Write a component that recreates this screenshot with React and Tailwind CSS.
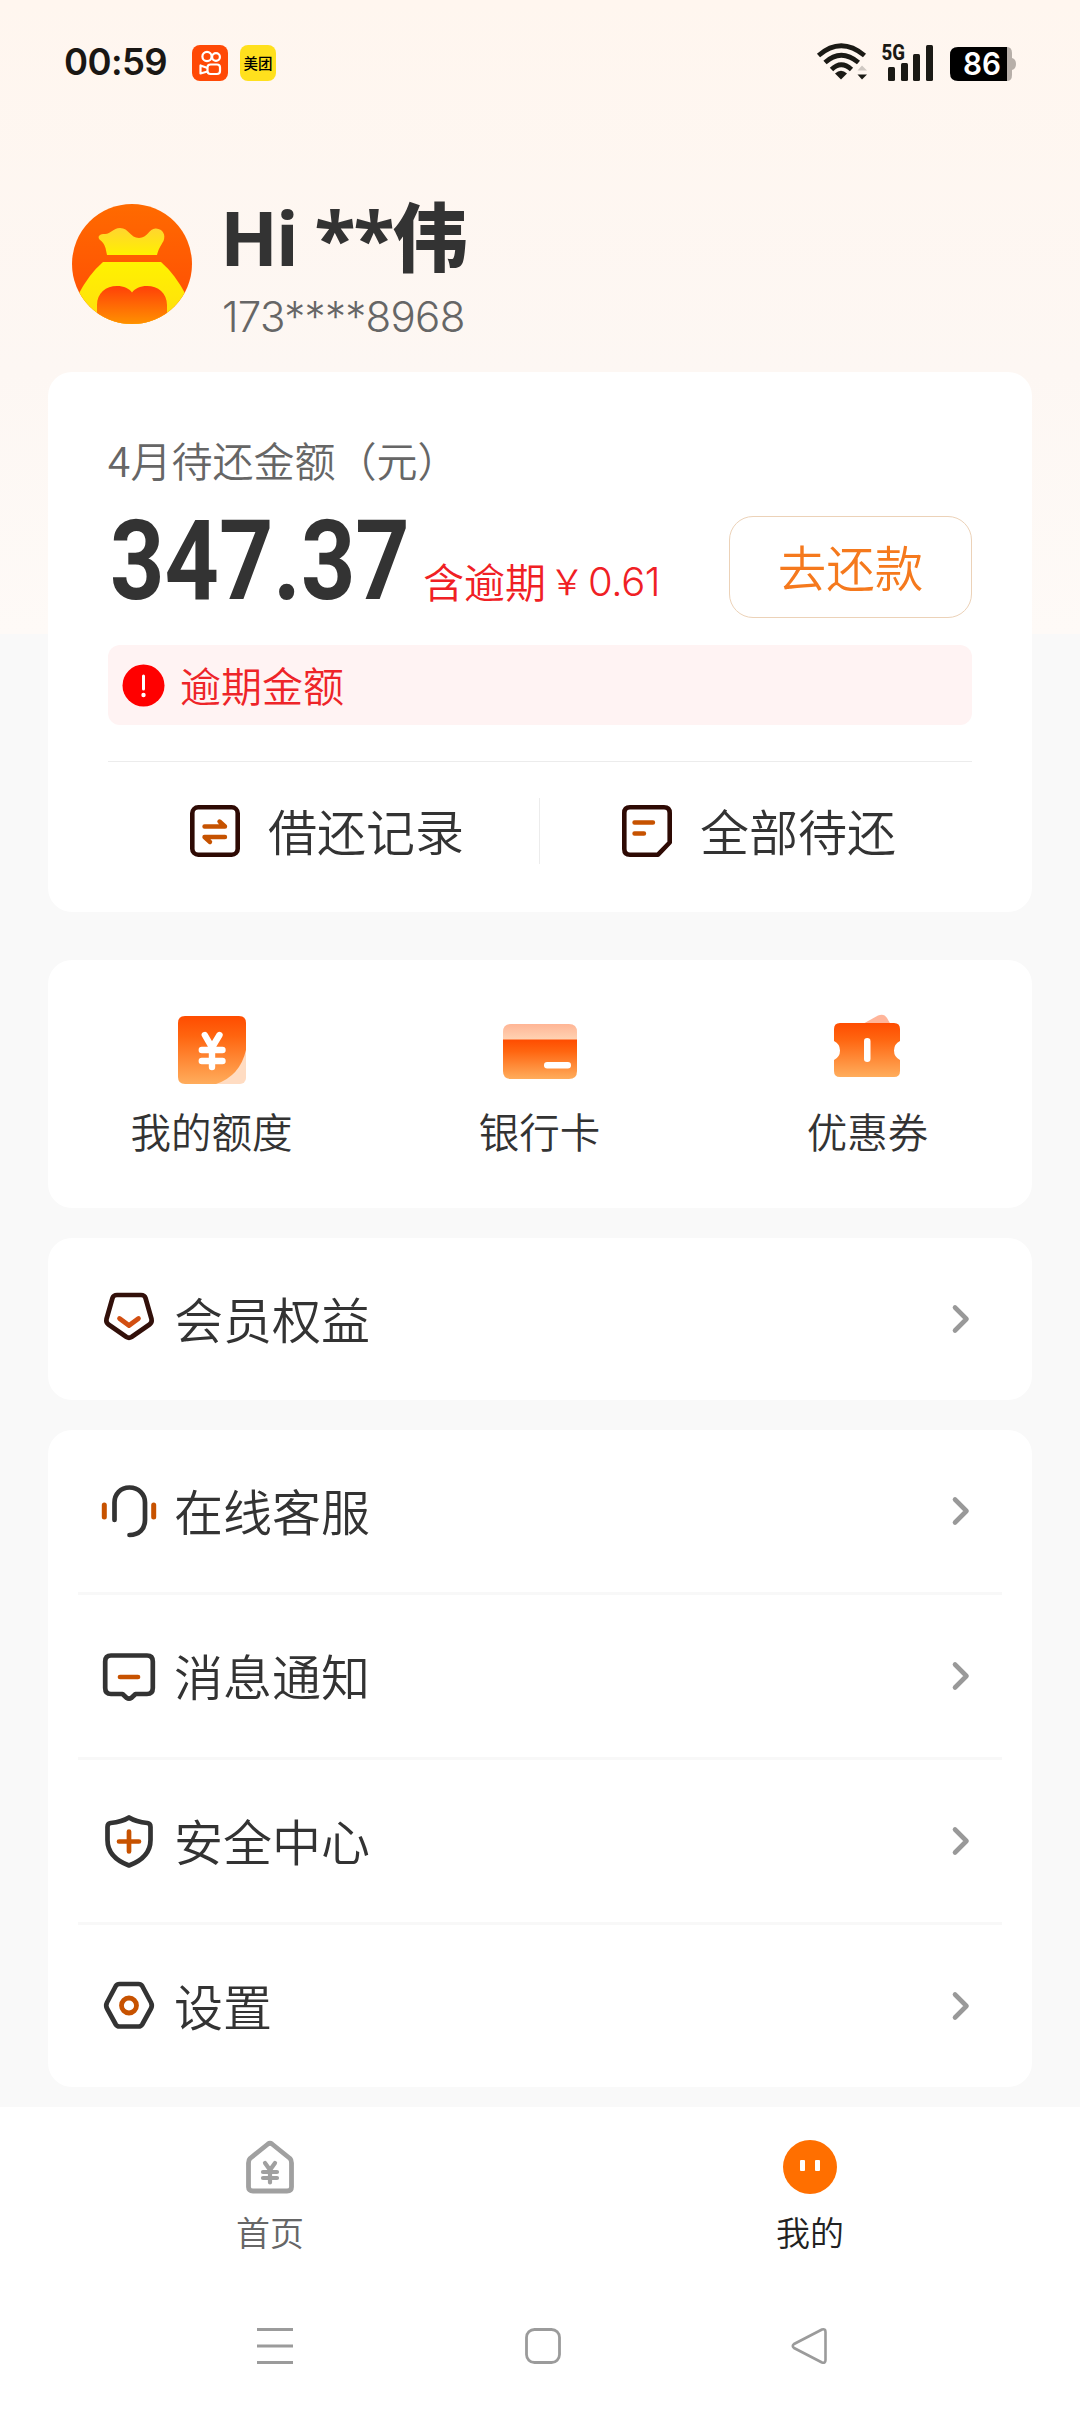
const font = "font-['Noto_Sans_CJK_SC',sans-serif]";

function StatusBar() {
  return (
    <header className="flex h-[124px] items-center px-16">
      <span className="w-[128px] text-[36.5px] leading-none font-semibold tracking-[-0.6px] text-[#1a1714] font-['Inter',sans-serif]">00:59</span>
      <div className="flex gap-3 pt-0.5">
        <svg className="size-9" viewBox="0 0 36 36">
          <rect width="36" height="36" rx="8" fill="#ff4906" />
          <g fill="none" stroke="#fff" strokeWidth="2.2" strokeLinejoin="round">
            <circle cx="15" cy="11.500" r="4.600" />
            <circle cx="24" cy="12" r="3.900" />
            <rect x="15.500" y="19.500" width="12.500" height="9.500" rx="3" />
            <path d="M15.500 23 8.500 20.500V28.500L15.500 26.500" />
          </g>
        </svg>
        <span className={`flex size-9 items-center justify-center rounded-lg bg-[#ffe01d] text-[14.500px] font-medium whitespace-nowrap text-black ${font}`}>美团</span>
      </div>
      <svg className="-mr-1 ml-auto h-[52px] w-[204px]" viewBox="0 -6 204 52">
        <g fill="none" stroke="#1b1a15" strokeWidth="4.800">
          <path d="M2.500 13.500Q25-6 48.500 13.500" />
          <path d="M9 20.500Q25 6 42.500 20.500" />
          <path d="M15.500 27.500Q25 18 35.500 27.500" />
        </g>
        <path d="M19 31.500Q25 26 31 31.500L25 37.500Z" fill="#1b1a15" />
        <path d="M41.500 28.500 46 23.500 51 28.500Z" fill="#cfc8c2" />
        <path d="M41.500 32.500H51L46 37.500Z" fill="#1b1a15" />
        <text x="65.500" y="18" fontSize="22.500" fontWeight="800" textLength="23.500" lengthAdjust="spacingAndGlyphs" fontFamily="Roboto, sans-serif" fill="#1b1a15">5G</text>
        <g fill="#1b1a15">
          <rect x="72" y="25" width="7" height="14" rx="1.500" />
          <rect x="85" y="21" width="7" height="18" rx="1.500" />
          <rect x="97" y="12" width="7" height="27" rx="1.500" />
          <rect x="110" y="3" width="7" height="36" rx="1.500" />
        </g>
        <path d="M190 5h1q5 0 5 6v5q4 1 4 6t-4 6v5q0 6-5 6h-1z" fill="#b7afa9" />
        <path d="M142 5h49v34H142q-8 0-8-8V13q0-8 8-8z" fill="#000" />
        <text x="147" y="33" fontSize="31" fontWeight="600" textLength="38" lengthAdjust="spacingAndGlyphs" fontFamily="Inter, sans-serif" fill="#fff">86</text>
      </svg>
    </header>
  );
}

function Avatar() {
  return (
    <svg className="size-[120px] shrink-0" viewBox="0 0 120 120">
      <defs>
        <clipPath id="av"><circle cx="60" cy="60" r="60" /></clipPath>
        <linearGradient id="avBg" x1="0" y1="0" x2="0" y2="1"><stop stopColor="#ff6a00" /><stop offset="1" stopColor="#ff4a05" /></linearGradient>
        <linearGradient id="avCrown" x1="0" y1="0" x2="0" y2="1"><stop stopColor="#ffd530" /><stop offset="1" stopColor="#fff000" /></linearGradient>
        <linearGradient id="avBody" x1="0" y1="0" x2="0" y2="1"><stop stopColor="#fff200" /><stop offset="1" stopColor="#ffdc10" /></linearGradient>
        <linearGradient id="avHeart" x1="0" y1="0" x2="0" y2="1"><stop stopColor="#ff4008" /><stop offset="1" stopColor="#ff9500" /></linearGradient>
      </defs>
      <g clipPath="url(#av)">
        <rect width="120" height="120" fill="url(#avBg)" />
        <path d="M35 51 33.500 44Q32 38.500 27.500 35.500C25 32 28 30 33 30C39 30 41 24 48 24C57 24 58 34 67 34C76 34 77 24 84 24.500C91 25 94 31 91.500 37C88 43 86.500 45 85 51Z" fill="url(#avCrown)" />
        <path d="M31 58H89Q103 70 114 91L98 124H22L6 91Q17 70 31 58Z" fill="url(#avBody)" />
        <path d="M25 122V101C25 89 34 82 45 82C52 82 57 84.500 60 88.500C63 84.500 68 82 75 82C86 82 95 89 95 101V122Z" fill="url(#avHeart)" />
      </g>
    </svg>
  );
}

function Profile() {
  return (
    <section className="flex h-[248px] px-[72px] pt-[80px]">
      <Avatar />
      <div className="ml-[28px] flex flex-col whitespace-nowrap">
        <h1 className="mt-[-7px] text-[76px] leading-[80px] font-bold tracking-[-2.300px] text-[#333] font-['Open_Sans','Noto_Sans_CJK_SC',sans-serif]">Hi **<span className="font-black text-[75px]">伟</span></h1>
        <p className="mt-[15px] ml-[2px] text-[42px] leading-[50px] font-[330] tracking-[-0.700px] text-[#666] font-['Inter',sans-serif]">173****8968</p>
      </div>
    </section>
  );
}

function RecordIcon() {
  return (
    <svg className="h-[52px] w-[50px]" viewBox="0 0 50 52" fill="none" strokeLinecap="round" strokeLinejoin="round">
      <rect x="2.300" y="2.300" width="45.400" height="47.400" rx="6" stroke="#2e0a04" strokeWidth="4.600" />
      <path d="M14.500 21.500H35L29.500 16.500M35 32H14.500L20 37" stroke="#c65200" strokeWidth="4.400" />
    </svg>
  );
}

function BillIcon() {
  return (
    <svg className="h-[52px] w-[50px]" viewBox="0 0 50 52" fill="none" strokeLinecap="round" strokeLinejoin="round">
      <path d="M8 2.300H42Q47.700 2.300 47.700 8V37.500L36 49.700H8Q2.300 49.700 2.300 44V8Q2.300 2.300 8 2.300Z" stroke="#2e0a04" strokeWidth="4.600" />
      <path d="M12.500 17.500H31M12.500 28.500H22" stroke="#c65200" strokeWidth="4.400" />
    </svg>
  );
}

function BillCard() {
  return (
    <section className="h-[540px] rounded-3xl bg-white px-[60px] pt-[64px]">
      <p className="text-[41px] leading-[46px] font-[350] whitespace-nowrap text-[#666]">4月待还金额（元）</p>
      <div className="mt-[34px] flex h-[102px] items-stretch">
        <div className="w-[315px] pt-[6px] pl-[2px] whitespace-nowrap">
          <span className="block w-max origin-left scale-x-[0.855] text-[111px] leading-[79px] font-bold text-[#333] font-['Roboto',sans-serif]">347.37</span>
        </div>
        <span className="flex pt-[41px] text-[41px] leading-[46px] font-[350] whitespace-nowrap text-[#f02024]">
          含逾期
          <span className="w-[42px] text-center text-[35px]">￥</span>
          <span className="pt-[2px] text-[40px] font-[350] tracking-[-0.400px] font-['Inter',sans-serif]">0.61</span>
        </span>
        <button className="ml-auto h-[102px] w-[243px] rounded-3xl border border-[#ecd2b8] pb-0.5 text-[48.500px] leading-none font-[350] whitespace-nowrap text-[#f5791d]">去还款</button>
      </div>
      <div className="mt-[27px] flex h-20 items-center rounded-xl bg-[#fff3f3] pl-[14px] text-[41px] leading-[46px] font-[350] text-[#ee2428]">
        <svg className="mr-[15px] size-[43px]" viewBox="0 0 43 43">
          <circle cx="21.500" cy="21.500" r="21" fill="#f00" />
          <path d="M21.500 12V25" stroke="#fff" strokeWidth="3" strokeLinecap="round" />
          <circle cx="21.500" cy="31" r="2.200" fill="#fff" />
        </svg>
        <span className="-mt-0.5">逾期金额</span>
      </div>
      <div className="mt-9 grid h-[150px] grid-cols-2 border-t border-[#ececec] text-[49px] leading-none font-[350] whitespace-nowrap text-[#333]">
        <div className="flex h-[138px] items-center pl-[82px]">
          <RecordIcon /><span className="-mt-1 ml-[28px]">借还记录</span>
          <i className="ml-auto h-[66px] w-px bg-[#ececec]" />
        </div>
        <div className="flex h-[138px] items-center pl-[82px]">
          <BillIcon /><span className="-mt-1 ml-[28px]">全部待还</span>
        </div>
      </div>
    </section>
  );
}

function QuotaIcon() {
  return (
    <svg className="size-[68px]" viewBox="0 0 68 68">
      <defs><linearGradient id="warm" x1="0" y1="0" x2="0" y2="1"><stop stopColor="#ff4c00" /><stop offset=".3" stopColor="#ff6510" /><stop offset="1" stopColor="#ffad5c" /></linearGradient></defs>
      <rect x="20" y="20" width="48" height="48" rx="6" fill="#ffdcc2" />
      <path d="M7 0H61Q68 0 68 7V34Q62 60 38 68H7Q0 68 0 61V7Q0 0 7 0Z" fill="url(#warm)" />
      <path d="M26.800 19 34 31.500 41.500 19M34 31.500V51M23.800 34H44.500M23.800 45H44.500" stroke="#fff" strokeWidth="6.400" fill="none" strokeLinecap="round" strokeLinejoin="round" />
    </svg>
  );
}

function CardIcon() {
  return (
    <svg className="mt-[3px] h-[56px] w-[74px]" viewBox="0 0 74 56">
      <defs><linearGradient id="pale" x1="0" y1="0" x2="0" y2="1"><stop stopColor="#ffb595" /><stop offset="1" stopColor="#ffd3b3" /></linearGradient></defs>
      <path d="M8 0H66Q74 0 74 8V16H0V8Q0 0 8 0Z" fill="url(#pale)" />
      <path d="M0 15.500H74V47Q74 55 66 55H8Q0 55 0 47Z" fill="url(#warm)" />
      <rect x="41" y="38" width="27" height="6.500" rx="3.200" fill="#fff" />
    </svg>
  );
}

function CouponIcon() {
  return (
    <svg className="-mt-[8px] mr-[2px] h-[64px] w-[66px]" viewBox="0 0 66 64">
      <path d="M27 11 44 1.500Q50-1 53 4L57 11Z" fill="#ffb59a" />
      <path d="M6 9H60Q66 9 66 15V27Q60 30 60 36.500T66 46V57Q66 63 60 63H6Q0 63 0 57V46Q6 43 6 36.500T0 27V15Q0 9 6 9Z" fill="url(#warm)" />
      <rect x="30" y="24" width="6.500" height="24" rx="3.200" fill="#fff" />
    </svg>
  );
}

const shortcuts = [
  { label: "我的额度", Icon: QuotaIcon },
  { label: "银行卡", Icon: CardIcon },
  { label: "优惠券", Icon: CouponIcon },
];

function Shortcuts() {
  return (
    <section className="mt-12 grid h-[248px] grid-cols-3 rounded-3xl bg-white pt-[50px]">
      {shortcuts.map(({ label, Icon }) => (
        <div key={label} className="flex flex-col items-center text-[40.500px] font-[350] text-[#333]">
          <div className="flex h-20 items-center"><Icon /></div>
          <span className="mt-[18px] mr-px leading-[46px]">{label}</span>
        </div>
      ))}
    </section>
  );
}

function LineIcon({ children }) {
  return (
    <svg className="h-[56px] w-[56px]" viewBox="0 0 56 56" fill="none" stroke="#333" strokeWidth="4.700" strokeLinecap="round" strokeLinejoin="round">
      {children}
    </svg>
  );
}

const accent = "#c75200";

const MemberIcon = () => (
  <LineIcon>
    <path d="M16 4H40Q43.500 4 44.500 7L50.500 28Q51.300 31.500 48.500 33.500L30.500 46Q28 47.500 25.500 46L7.500 33.500Q4.700 31.500 5.500 28L11.500 7Q12.500 4 16 4Z" stroke="#32100a" />
    <path d="M18.500 27.500 28 34.500 37.500 27.500" stroke="#d24f12" />
  </LineIcon>
);

const ServiceIcon = () => (
  <LineIcon>
    <path d="M13.500 37V19.500C13.500 11 19.500 4.500 28.500 4.500S44 11 44 19.500V37C44 46 38 52 28.500 52" />
    <path d="M3.300 22V34M52.700 22V34" stroke={accent} strokeWidth="5" />
  </LineIcon>
);

const MessageIcon = () => (
  <LineIcon>
    <path d="M10 7.500H46Q51.800 7.500 51.800 13.500V40Q51.800 46 46 46H34.500L30.500 49.800Q28 51.500 25.500 49.800L21.500 46H10Q4.200 46 4.200 40V13.500Q4.200 7.500 10 7.500Z" />
    <path d="M19 29H37" stroke={accent} />
  </LineIcon>
);

const SafeIcon = () => (
  <LineIcon>
    <path d="M28 4.500C35 9 41 9.500 46.500 10Q49.500 10.500 49.500 14V27C49.500 40 40 48 28 52.500C16 48 6.500 40 6.500 27V14Q6.500 10.500 9.500 10C15 9.500 21 9 28 4.500Z" />
    <path d="M28 18.500V38.500M18 28.500H38" stroke={accent} />
  </LineIcon>
);

const SettingsIcon = () => (
  <LineIcon>
    <path d="M18.500 6H37.500Q40 6 41.200 8L50 24.500Q51.500 27.500 50 30.500L41.200 46.500Q40 48.500 37.500 48.500H18.500Q16 48.500 14.800 46.500L6 30.500Q4.500 27.500 6 24.500L14.800 8Q16 6 18.500 6Z" />
    <circle cx="28" cy="27.500" r="7.500" stroke={accent} strokeWidth="4.800" />
  </LineIcon>
);

function Row({ label, Icon, className }) {
  return (
    <div className={`flex items-center pr-[29px] pl-[23px] ${className}`}>
      <Icon />
      <span className="-mt-0.5 ml-[17px] text-[49px] leading-[56px] font-[350] text-[#333]">{label}</span>
      <svg className="ml-auto h-8 w-6" viewBox="0 0 24 32" fill="none" stroke="#999" strokeWidth="4.600" strokeLinecap="round" strokeLinejoin="round">
        <path d="M6 4.500 17.500 16 6 27.500" />
      </svg>
    </div>
  );
}

function Menu() {
  return (
    <>
      <section className="mt-[30px] rounded-3xl bg-white px-[30px]">
        <Row label="会员权益" Icon={MemberIcon} className="h-[162px]" />
      </section>
      <section className="mt-[30px] rounded-3xl bg-white px-[30px]">
        <Row label="在线客服" Icon={ServiceIcon} className="h-[165px] border-b-[3px] border-[#f8f8f8]" />
        <Row label="消息通知" Icon={MessageIcon} className="h-[165px] border-b-[3px] border-[#f8f8f8]" />
        <Row label="安全中心" Icon={SafeIcon} className="h-[165px] border-b-[3px] border-[#f8f8f8]" />
        <Row label="设置" Icon={SettingsIcon} className="h-[162px]" />
      </section>
    </>
  );
}

function TabBar() {
  return (
    <nav className="mt-[20px] grid h-[173px] grid-cols-2 bg-white pt-[32px] text-[34px] leading-[40px] font-[350]">
      <div className="flex flex-col items-center text-[#666]">
        <svg className="h-[56px] w-[50px]" viewBox="0 0 50 56" fill="none" stroke="#a0a0a0" strokeWidth="4.800" strokeLinejoin="round" strokeLinecap="round">
          <path d="M23 5Q25 3.500 27 5L45 19.500Q46.500 21 46.500 24V48Q46.500 52 42 52H8Q3.500 52 3.500 48V24Q3.500 21 5 19.500Z" />
          <path d="M20 24 25 31 30 24M25 31V43.500M18 33H32M18 39H32" strokeWidth="4.200" />
        </svg>
        <span className="mt-[17px]">首页</span>
      </div>
      <div className="flex flex-col items-center text-[#222]">
        <svg className="size-[56px]" viewBox="0 0 56 56">
          <circle cx="28" cy="28" r="27" fill="#ff6f00" />
          <rect x="18" y="21" width="5" height="11" rx="1" fill="#fff" />
          <rect x="33" y="21" width="5" height="11" rx="1" fill="#fff" />
        </svg>
        <span className="mt-[17px]">我的</span>
      </div>
    </nav>
  );
}

function SystemBar() {
  return (
    <footer className="flex grow items-start justify-between bg-white pt-[46px] pr-[250px] pl-[255px]">
      <svg className="size-10" viewBox="0 0 40 40" stroke="#9b9b9b" strokeWidth="3" fill="none"><path d="M2 3.500H38M2 20H38M2 36.500H38" /></svg>
      <svg className="size-10" viewBox="0 0 40 40" stroke="#9b9b9b" strokeWidth="2.800" fill="none"><rect x="3.500" y="3.500" width="33" height="33" rx="8" /></svg>
      <svg className="size-10" viewBox="0 0 40 40" stroke="#9b9b9b" strokeWidth="2.600" fill="none" strokeLinejoin="round"><path d="M4 18 32 3.500Q35.500 2.500 35.500 6V34Q35.500 37.500 32 36.500L4 22Q1.500 20 4 18Z" /></svg>
    </footer>
  );
}

export default function App() {
  return (
    <div className={`flex h-[2412px] w-[1080px] flex-col overflow-hidden bg-[#f9f9f9] bg-[linear-gradient(#fff6ef,#fdf7f3_372px,#fefaf7)] bg-[length:100%_634px] bg-no-repeat ${font}`}>
      <StatusBar />
      <Profile />
      <main className="px-12">
        <BillCard />
        <Shortcuts />
        <Menu />
      </main>
      <TabBar />
      <SystemBar />
    </div>
  );
}
